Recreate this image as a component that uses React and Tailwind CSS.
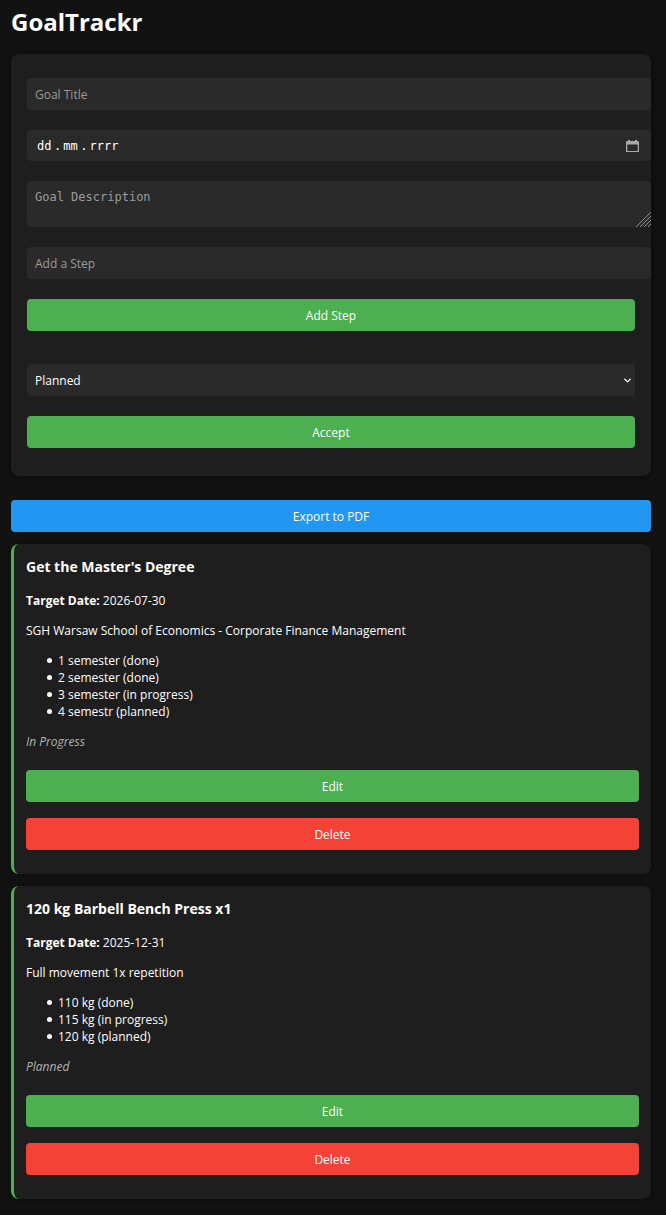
import { ChevronDown } from "lucide-react";

const goals = [
  {
    id: 1,
    title: "Get the Master's Degree",
    date: "2026-07-30",
    description: "SGH Warsaw School of Economics - Corporate Finance Management",
    steps: [
      "1 semester (done)",
      "2 semester (done)",
      "3 semester (in progress)",
      "4 semestr (planned)",
    ],
    status: "In Progress",
  },
  {
    id: 2,
    title: "120 kg Barbell Bench Press x1",
    date: "2025-12-31",
    description: "Full movement 1x repetition",
    steps: ["110 kg (done)", "115 kg (in progress)", "120 kg (planned)"],
    status: "Planned",
  },
];

const field =
  "block w-full rounded bg-[#2a2a2a] px-2 text-white placeholder:text-[#9a9a9a] outline-none";

function Button({ tone, type = "button", children }) {
  const tones = {
    green: "bg-[#4caf50]",
    red: "bg-[#f44336]",
    blue: "bg-[#2196f3]",
  };
  return (
    <button
      type={type}
      className={`block h-8 w-full cursor-pointer rounded text-center text-white ${tones[tone]}`}
    >
      {children}
    </button>
  );
}

function CalendarIcon() {
  return (
    <svg width="13" height="13" viewBox="0 0 13 13" fill="#a8aaa8" aria-hidden="true">
      <path fillRule="evenodd" d="M2 0h2v1h5V0h2v1h1l1 1v10H0V2l1-1h1zM1.300 4.500v6.500h10.400V4.500z" />
    </svg>
  );
}

function ResizeGrip() {
  return (
    <svg
      width="15"
      height="15"
      viewBox="0 0 15 15"
      className="pointer-events-none absolute right-0 bottom-0"
      stroke="#8c8c8c"
      strokeWidth="1"
      aria-hidden="true"
    >
      <path d="M0 15L15 0M4 15L15 4M8 15L15 8M12 15L15 12" />
    </svg>
  );
}

function DateField() {
  const part =
    "bg-transparent p-0 text-white placeholder:text-white placeholder:opacity-100 outline-none";
  return (
    <div
      role="group"
      aria-label="Target date"
      className="flex h-[31px] w-full items-center gap-[2px] rounded bg-[#2a2a2a] pt-px pr-3 pl-[10px] font-['DejaVu_Sans_Mono',monospace] text-[12px]"
    >
      <input aria-label="Day" placeholder="dd" maxLength={2} className={`w-[15px] ${part}`} />
      <span className="text-white">.</span>
      <input aria-label="Month" placeholder="mm" maxLength={2} className={`w-[15px] ${part}`} />
      <span className="text-white">.</span>
      <input aria-label="Year" placeholder="rrrr" maxLength={4} className={`w-[30px] ${part}`} />
      <button type="button" aria-label="Open calendar" className="ml-auto cursor-pointer">
        <CalendarIcon />
      </button>
    </div>
  );
}

function GoalForm() {
  return (
    <form
      onSubmit={(e) => e.preventDefault()}
      className="rounded-lg bg-[#1e1e1e] pt-6 pb-7 pl-4 shadow-[0_0_10px_rgba(0,0,0,0.5)]"
    >
      <div className="flex flex-col gap-5">
        <input aria-label="Goal Title" placeholder="Goal Title" className={`h-8 ${field}`} />
        <DateField />
        <div className="relative">
          <textarea
            aria-label="Goal Description"
            placeholder="Goal Description"
            className={`h-[46px] resize py-2 font-['DejaVu_Sans_Mono',monospace] text-[12px] leading-4 [&::-webkit-resizer]:bg-transparent ${field}`}
          />
          <ResizeGrip />
        </div>
        <input aria-label="Add a Step" placeholder="Add a Step" className={`h-8 ${field}`} />
      </div>
      <div className="mt-5 mr-4">
        <Button tone="green">Add Step</Button>
        <div className="relative mt-[33px] mb-5">
          <select aria-label="Status" className={`h-8 appearance-none ${field}`}>
            <option>Planned</option>
            <option>In Progress</option>
            <option>Done</option>
          </select>
          <ChevronDown
            size={11}
            strokeWidth={3}
            className="pointer-events-none absolute top-[11px] right-[2px] text-white"
          />
        </div>
        <Button tone="green" type="submit">
          Accept
        </Button>
      </div>
    </form>
  );
}

function GoalCard({ goal }) {
  return (
    <article className="rounded-lg border-l-3 border-[#4caf50] bg-[#1e1e1e] p-3 pb-6 shadow-[0_0_6px_rgba(0,0,0,0.4)]">
      <h2 className="mb-[14px] text-[14px] leading-[22px] font-bold">{goal.title}</h2>
      <p className="mb-[13px]">
        <strong className="font-bold">Target Date:</strong> {goal.date}
      </p>
      <p className="mb-[13px]">{goal.description}</p>
      <ul className="mb-[13px] pl-[21px]">
        {goal.steps.map((step) => (
          <li
            key={step}
            className="flex items-center gap-[6px] before:size-[5px] before:rounded-full before:bg-white"
          >
            {step}
          </li>
        ))}
      </ul>
      <p className="mb-5 text-[#b3b3b3] italic">{goal.status}</p>
      <div className="flex flex-col gap-4">
        <Button tone="green">Edit</Button>
        <Button tone="red">Delete</Button>
      </div>
    </article>
  );
}

export default function App() {
  return (
    <div className="min-h-screen bg-[#121212] pt-1 pr-[15px] pb-4 pl-[11px] font-['Open_Sans','Noto_Sans',sans-serif] text-[12px] leading-[17px] text-white">
      <h1 className="mb-[14px] text-[24px] leading-9 font-bold">GoalTrackr</h1>
      <main>
        <GoalForm />
        <div className="mt-6 flex flex-col gap-3">
          <Button tone="blue">Export to PDF</Button>
          {goals.map((goal) => (
            <GoalCard key={goal.id} goal={goal} />
          ))}
        </div>
      </main>
    </div>
  );
}
